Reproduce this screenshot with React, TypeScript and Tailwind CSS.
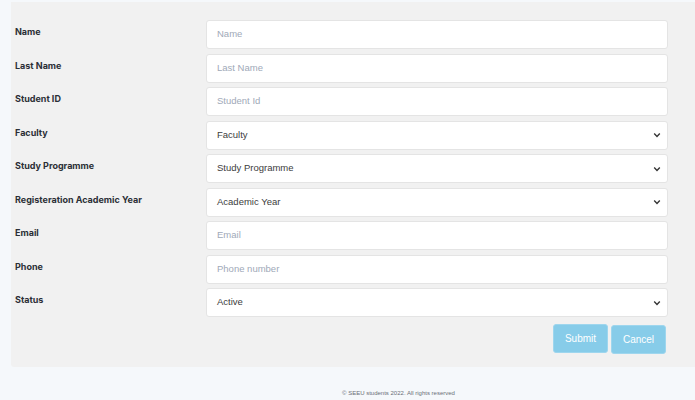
import React from 'react'

type Field = {
  label: string
  kind: 'input' | 'select'
  text: string
}

const fields: Field[] = [
  { label: 'Name', kind: 'input', text: 'Name' },
  { label: 'Last Name', kind: 'input', text: 'Last Name' },
  { label: 'Student ID', kind: 'input', text: 'Student Id' },
  { label: 'Faculty', kind: 'select', text: 'Faculty' },
  { label: 'Study Programme', kind: 'select', text: 'Study Programme' },
  { label: 'Registeration Academic Year', kind: 'select', text: 'Academic Year' },
  { label: 'Email', kind: 'input', text: 'Email' },
  { label: 'Phone', kind: 'input', text: 'Phone number' },
  { label: 'Status', kind: 'select', text: 'Active' },
]

function Chevron() {
  return (
    <svg width="8" height="6" viewBox="0 0 8 6" className="shrink-0">
      <path d="M1.2 1.6 L4 4.4 L6.8 1.6" fill="none" stroke="#333" strokeWidth="1.4" />
    </svg>
  )
}

function FormRow({ field }: { field: Field }) {
  return (
    <div className="flex items-start">
      <label className="w-[191px] shrink-0 pt-[5px] text-[9px] font-bold text-[#2b2f36] font-['Inter',sans-serif]">
        {field.label}
      </label>
      <div className="flex h-[29px] flex-1 items-center justify-between rounded-[3px] border border-[#e4e4e4] bg-white pl-[10px] pr-[6px] font-['Liberation_Sans',Arial,sans-serif] text-[9.5px]">
        {field.kind === 'input' ? (
          <span className="text-[#a0a9b8]">{field.text}</span>
        ) : (
          <>
            <span className="text-[#3c3c3c]">{field.text}</span>
            <Chevron />
          </>
        )}
      </div>
    </div>
  )
}

export default function App() {
  return (
    <div className="min-h-[400px] w-[695px] bg-[#f5f8fb] pt-[2px]">
      <div className="ml-[11px] rounded-bl-[3px] bg-[#f1f1f1] pb-[13px] pl-[4px] pr-[27px] pt-[18px]">
        <div className="flex flex-col gap-[4.5px]">
          {fields.map((f) => (
            <FormRow key={f.label} field={f} />
          ))}
        </div>
        <div className="mt-[7px] flex justify-end gap-[3px] pr-[2px] font-['Liberation_Sans',Arial,sans-serif] text-[10px] text-white">
          <button className="h-[29px] w-[55px] rounded-[3px] border border-[#9ed6ee] bg-[#87cce9]">
            Submit
          </button>
          <button className="mt-[1px] h-[29px] w-[55px] rounded-[3px] border border-[#9ed6ee] bg-[#87cce9]">
            Cancel
          </button>
        </div>
      </div>
      <div className="mt-[22px] pl-[102px] text-center font-['Liberation_Sans',Arial,sans-serif] text-[6px] text-[#6b6f78]">
        © SEEU students 2022. All rights reserved
      </div>
    </div>
  )
}
